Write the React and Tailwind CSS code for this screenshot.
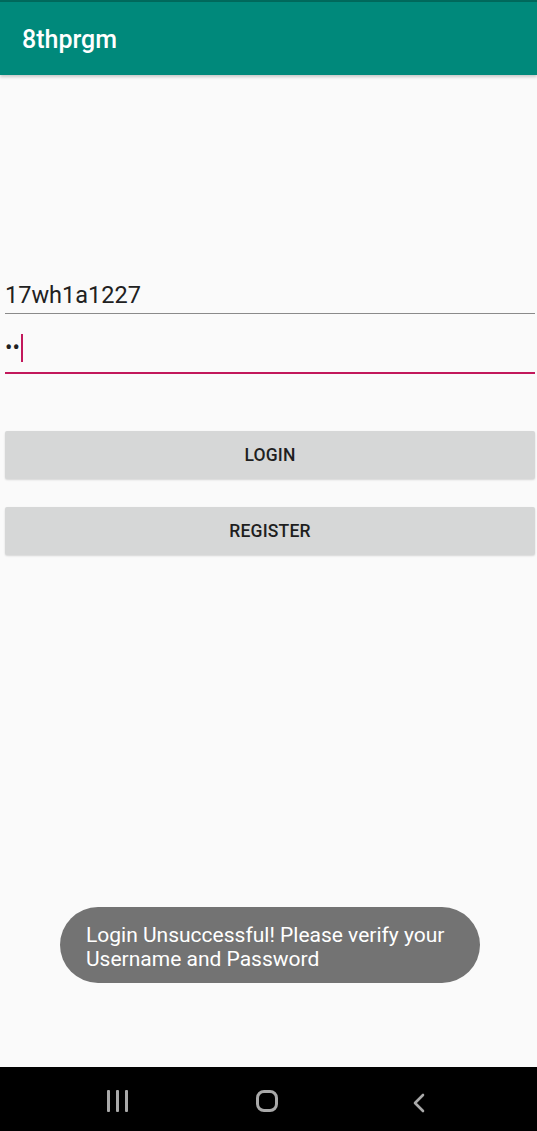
export default function App() {
  return (
    <div
      className="relative w-[537px] h-[1131px] bg-[#fafafa] flex flex-col overflow-hidden"
      style={{ fontFamily: "Roboto, 'Liberation Sans', sans-serif" }}
    >
      <div className="h-[2px] bg-[#00695c]" />
      <div className="h-[73px] bg-[#00897b] flex items-center pl-[22px] pt-[3px] shadow-[0_2px_3px_rgba(0,0,0,0.2)]">
        <span className="text-white text-[25px] font-medium">8thprgm</span>
      </div>

      <div className="flex flex-col pr-[2px] pl-[5px] pt-[204px] flex-1">
        <div className="h-[34px] flex items-end text-[23.5px] text-[#212121] leading-none pb-[6px]">
          17wh1a1227
        </div>
        <div className="h-px bg-[#8a8a8a]" />
        <div className="h-[58px] flex items-center pt-[10px]">
          <span className="text-[#212121] text-[22px] leading-none">••</span>
          <span className="w-[2px] h-[28px] bg-[#c2185b] ml-[1px]" />
        </div>
        <div className="h-[2px] bg-[#c2185b]" />

        <button className="mt-[57px] h-[48px] bg-[#d6d7d7] rounded-[2px] shadow-[0_1px_2px_rgba(0,0,0,0.15)] text-[17.5px] font-medium text-[#1f1f1f] tracking-[0.2px]">
          LOGIN
        </button>
        <button className="mt-[28px] h-[48px] bg-[#d6d7d7] rounded-[2px] shadow-[0_1px_2px_rgba(0,0,0,0.15)] text-[17.5px] font-medium text-[#1f1f1f] tracking-[0.2px]">
          REGISTER
        </button>

        <div className="flex-1" />
        <div className="self-center mb-[84px] w-[420px] h-[76px] rounded-[38px] bg-[#737373] flex items-center pl-[26px] pt-[3px]">
          <p className="text-white text-[21px] leading-[24px]">
            Login Unsuccessful! Please verify your
            <br />
            Username and Password
          </p>
        </div>
      </div>

      <div className="h-[64px] bg-black flex items-center">
        <div className="w-full relative h-full">
          <div className="absolute left-[107px] top-[23px] flex gap-[6px]">
            <span className="w-[3px] h-[22px] bg-[#a9a9a9] rounded-[1px]" />
            <span className="w-[3px] h-[22px] bg-[#a9a9a9] rounded-[1px]" />
            <span className="w-[3px] h-[22px] bg-[#a9a9a9] rounded-[1px]" />
          </div>
          <div className="absolute left-[256px] top-[23px] w-[22px] h-[22px] border-[3px] border-[#a9a9a9] rounded-[8px]" />
          <svg className="absolute left-[411px] top-[26px]" width="16" height="20" viewBox="0 0 16 20">
            <path d="M12 2 L4 10 L12 18" fill="none" stroke="#a9a9a9" strokeWidth="2.6" strokeLinecap="round" strokeLinejoin="round" />
          </svg>
        </div>
      </div>
    </div>
  );
}
